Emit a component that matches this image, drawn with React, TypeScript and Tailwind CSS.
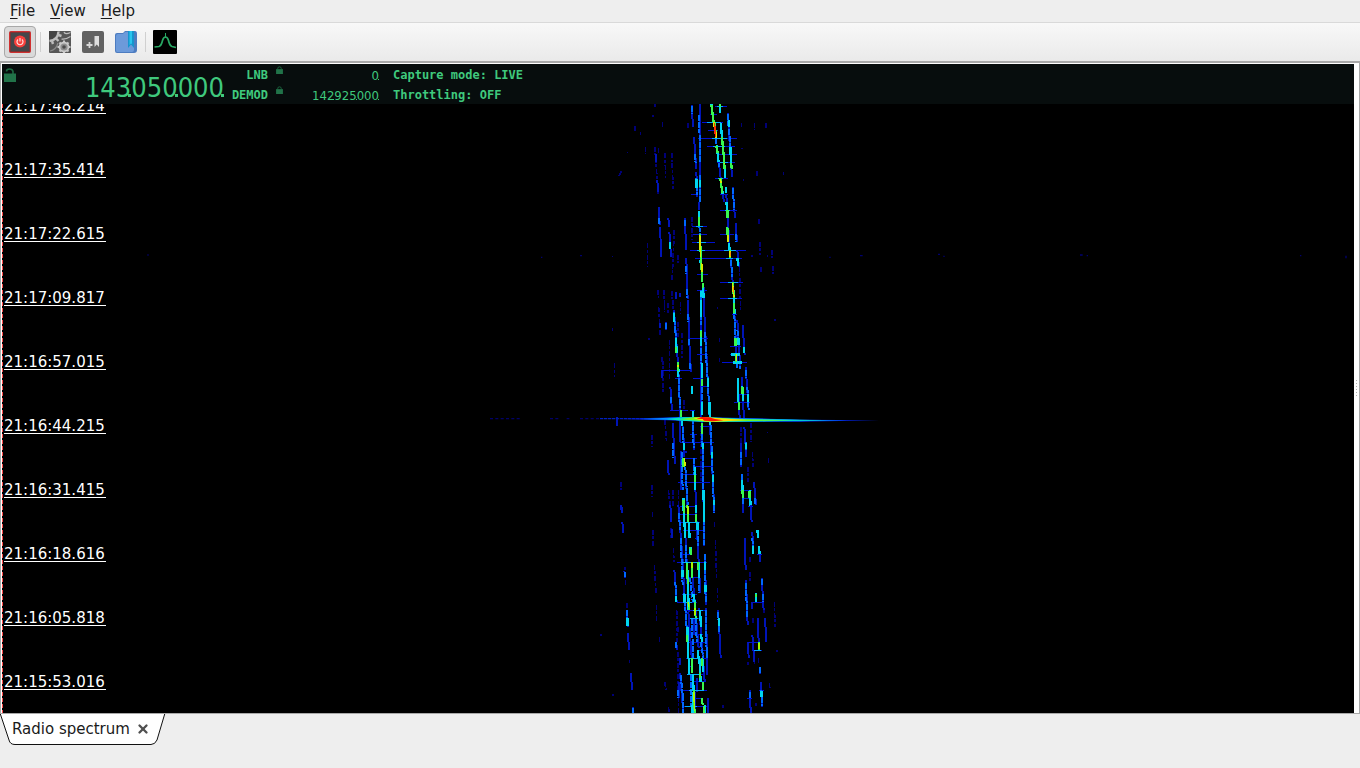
import React from 'react';
import { X } from 'lucide-react';

const MENUS = ['File', 'View', 'Help'];

const TIMESTAMPS = [
  '21:17:48.214',
  '21:17:35.414',
  '21:17:22.615',
  '21:17:09.817',
  '21:16:57.015',
  '21:16:44.215',
  '21:16:31.415',
  '21:16:18.616',
  '21:16:05.818',
  '21:15:53.016',
];

interface Level {
  color: string;
  width: number;
  dash?: string;
  d: string;
}

interface Block {
  offset: number;
  levels: Level[];
}

// Signal traces, weakest level first so the strong ones stay on top
const BLOCKS: Block[] = [
  {
    offset: 0,
    levels: [
      {
        color: '#000078',
        width: 5,
        dash: '15 4 9 6',
        d: 'M164 140L175 282M175 145V160M158 45V52M165 12V20M195 160L197 235M215 160V185M216 190L220 268M223 390L216 545M187 65V85M136 140V162M142 430V500M173 570L176 595M192 570L194 630M215 572V598M234 465V490M219 600V630M104 78V92M121 95V104M64 214L55 232M463 68V90M497 68V86M470 212V232M550 216V226M476 358V376M479 425V465M516 450V475M518 498V522M483 500V520M37 467V472M455 465V472M502 465V472M418 500L422 630M275 350V420M82 155V160M264 70V86M422 145H430M430 236V242M424 70V82',
      },
      {
        color: '#0014b8',
        width: 6,
        d: 'M275 15L279 82M282 112L289 208M289 215L292 290M299 12V305M177 320L179 376M180 380L184 472M205 355L208 380M208 395L213 470M254 353L259 450M259 475L263 598M357 190L362 235M369 285L372 306M379 285L388 430M392 475L398 545M383 40L396 232M398 262L405 355M407 370L411 427M412 450L417 500M168 162V186M172 240L174 276M228 575V596M239 580V592M312 560V630M297 305V330',
      },
      {
        color: '#0010d0',
        width: 3,
        d: 'M345 19H380M305 67H368M325 92H355M295 115H412M320 139H406M350 163H410M350 187H405M345 235H385M360 331H412M275 379H320M280 403H320M360 403H402M275 427H345M270 451H438M285 475H425M290 523H325M360 547H430M290 571H322M360 595H426M330 43H350M272 283H290M360 283H385',
      },
      {
        color: '#0068ff',
        width: 6,
        dash: '18 3',
        d: 'M276 18V42M284 163L287 190M289 235L291 285M298 45V100M299 105L300 190M300 225V305M298 378L300 403M302 570V630M383 42L386 85M387 88L391 140M398 265L403 330M393 480L397 530M255 360V378M259 498V522M261 568V594M178 355V373M408 402V425M346 115L350 135M356 190V200',
      },
      {
        color: '#00a8ff',
        width: 3,
        d: 'M350 19H368M322 67H362M335 115H380M340 139H375M360 187H385M355 235H370M375 331H390M288 379H308M290 427H318M290 451H315M372 451H408M378 475H400M385 547H415M385 595H412',
      },
      {
        color: '#00d5f0',
        width: 7,
        d: 'M289 237V265M300 240V262M297 332V356M308 548L311 594M303 572V592M334 12L336 25M350 135L356 187M359 18L360 40M362 68L366 112M374 208L375 235M377 262L378 280M391 140L393 190M379 305L382 330M387 430L389 450M412 475L415 497M209 427V448M401 594L403 630M300 480V490M366 265L368 283M386 60V80',
      },
      {
        color: '#38f850',
        width: 7,
        d: 'M334 14L341 66M359 12V20M366 112L371 165M371 165L374 208M393 190L396 208M349 138L353 160M361 235L367 280M382 330V355M382 382L384 427M296 352L298 378M299 403L307 546M389 450L391 475M398 546L402 595M401 600V626M308 548V565M343 65L349 115',
      },
      {
        color: '#d8ec00',
        width: 5,
        d: 'M341 66L348 115M383 405V425M299 406L302 470M305 490L306 515M389 452L391 472M397 548L402 592M361 238L363 250M349 96V114M373 188V192',
      },
      { color: '#ff3000', width: 5, d: 'M343 68L347 112' },
      { color: '#ff9000', width: 3, d: 'M399 560L401 578M390 455V468' },
    ],
  },
  {
    offset: 600,
    levels: [
      {
        color: '#000078',
        width: 5,
        dash: '15 4 9 6',
        d: 'M176 22L181 108M193 0V35M204 10V42M241 5V42M188 180L190 276M234 65V110M246 100V175M208 120V240M195 360L200 430M155 405V440M155 555V592M43 190V232M37 84V94M146 114V120M525 58V64M352 20V28M358 115V125M358 175V186M205 570L212 630M219 570V618M235 570V628M452 370V425M457 455L459 500M505 475V495M444 500V546M62 545V570M302 380V545M422 380V430M502 395V400M185 170V185M252 300V330',
      },
      {
        color: '#0014b8',
        width: 6,
        d: 'M197 65L199 90M180 70V85M264 0L268 130M268 130L273 215M222 30L234 190M235 210L241 355M187 210V235M211 260L216 332M218 370L225 492M203 480L206 525M240 360V425M249 378L253 470M256 500L263 630M243 452V570M278 330L282 450M282 475L289 630M302 0V350M306 350L311 630M311 0L343 630M401 0L412 205M412 60L421 205M428 75L434 165M437 200L446 330M413 235L419 355M425 230L432 355M422 430V500M433 380L439 470M425 522L430 630M462 545L468 615M50 350V378M64 618V630M250 455H260',
      },
      {
        color: '#0010d0',
        width: 3,
        d: 'M270 115H325M290 163H325M280 235H310M185 211H270M225 235H245M300 259H328M390 139H422M390 163H420M365 187H440M415 283H445M402 307H450M210 331H265M270 331H285M300 379H335M270 403H290M240 427H342M240 475H290M280 499H340M240 523H290M235 547H330M420 571H455M425 595H450M240 619H290M395 43H412M330 427H342',
      },
      {
        color: '#0068ff',
        width: 6,
        dash: '18 3',
        d: 'M222 36L225 90M226 90L230 160M235 212L240 325M265 43V66M267 116V138M271 188V210M278 332L281 445M302 0V75M304 145L305 230M306 262V345M307 403L309 570M315 95L320 200M321 200L330 375M332 375L337 500M337 500L342 630M403 45L406 115M410 187V205M249 380V430M256 500L263 615M245 455L248 570M218 430V475M212 290V310M432 140V163M437 210V235M437 425V450M422 455V498M425 522L428 570M430 595V630M465 595V612M412 90L417 130M65 620V630M198 70V86M282 475V525M289 620V630M442 260L446 330M421 198V206',
      },
      {
        color: '#00d5f0',
        width: 7,
        d: 'M222 38V66M228 115L230 160M276 258V282M302 0V50M303 90V138M305 190V235M323 235V260M328 305L330 376M306 307V345M413 235L415 305M444 283V305M432 142V160M401 0L404 42M415 115V135M251 428V450M278 332V350M284 500L286 570M336 455V475M338 525V545M310 570L312 630M341 600V630M437 428V448M246 360V378M250 595V630M426 540L428 570M449 570L452 618M426 258L430 303M233 212V230M309 430V447M394 163H420M398 187H425M231 211H240',
      },
      {
        color: '#38f850',
        width: 7,
        d: 'M233 187L234 212M243 330V355M305 237V258M306 370L307 403M402 10V40M406 115V138M416 307V330M427 260V282M427 570L429 594M448 572V595M263 617V630M284 525V547M250 475V500M228 140V158M303 92V112M250 600V620M408 162V187',
      },
      { color: '#d8ec00', width: 5, d: 'M409 163V184M253 475L255 498M233 195V202M262 620V630' },
    ],
  },
  {
    offset: 1215,
    levels: [
      {
        color: '#000078',
        width: 5,
        dash: '15 4 9 6',
        d: 'M157 20V40M159 75L160 122M163 180L168 265M169 300V352M178 395V410M194 532L198 555M205 605L208 623M76 225V240M75 185V195M80 295V312M88 465V475M38 568V574M220 130L222 172M230 315L232 390M235 365L230 410M233 440L236 625M343 50V66M346 105L350 218M352 250V290M523 290L525 365M508 535L510 555M530 436V442M369 600V610M449 155V172M450 200V230M2 388V394M458 340V360M468 595V602M492 310V325M444 470V480M213 70V100M463 450V480M475 460V475',
      },
      {
        color: '#0014b8',
        width: 6,
        d: 'M64 0L66 25M67 52L70 85M73 197L76 220M80 315L85 365M84 385L87 435M92 505L97 555M98 605V625M211 0L214 52M215 72V98M223 195L230 292M228 410L232 436M241 460V480M235 0L249 180M248 180L262 400M240 505L250 623M257 100L266 320M265 320L276 470M278 218L296 430M287 0L301 265M298 310L314 530M311 0V122M314 148L319 300M318 310L322 510M325 580V623M341 0L343 25M354 315L360 410M360 410L362 460M430 0V25M434 100L437 195M438 225L443 360M452 0L455 52M457 80L460 148M476 122L481 170M485 218L491 315M495 340L499 410M473 340L476 410M457 390L463 470M444 410L446 460M450 555L452 623M480 485V507M483 530L487 605M455 290V312M236 530V580M286 560V623M281 340V390M292 520V560',
      },
      {
        color: '#0010d0',
        width: 3,
        d: 'M245 3H290M235 27H285M240 52H300M250 75H315M285 100H296M240 148H275M230 172H320M260 218H300M245 268H290M230 292H290M258 316H320M265 340H305M260 388H310M265 412H320M290 435H325M258 460H325M265 484H280M265 507H310M280 530H315M245 555H320M285 580H310M245 604H325M452 100H462M472 148H485M460 292H492M445 3H460M445 412H480M455 435H485M440 580H455M478 555H492',
      },
      {
        color: '#0068ff',
        width: 6,
        dash: '18 3',
        d: 'M237 25L240 75M242 100L248 240M253 265L262 400M272 510L275 623M288 340L290 410M292 50L294 122M298 220V265M314 148L317 290M318 315L320 460M322 438V460M341 0V25M354 320L358 385M438 235L441 340M457 100L460 147M226 230L229 292M80 315L84 362M74 200V216M483 555L487 603M98 608V625M488 268V290M485 222V243M242 510L248 570M270 218L278 290M275 340L280 460M235 555V578M480 486V505M450 560V578M229 412V432M312 20V120M302 410L310 460M440 410V412M250 570V623M258 120V170',
      },
      {
        color: '#00a8ff',
        width: 3,
        d: 'M245 172H295M255 52H290M250 292H275M278 316H308M270 340H295M262 460H300M262 507H300M268 555H312M255 604H290M462 435H482',
      },
      {
        color: '#00d5f0',
        width: 7,
        d: 'M250 0L256 98M266 50L269 100M262 365L265 460M266 460L268 507M264 240L266 315M280 268L284 292M298 460L302 530M293 435L296 460M278 507L281 555M287 0V25M292 50V75M311 0V50M295 170L297 218M300 315L303 365M303 388L306 410M314 172V195M316 240V262M247 195V215M253 268V290M271 125V148M472 75L475 98M476 122L479 147M467 265V292M356 340V362M82 340V362M228 272V290M484 558V575M261 170L264 240M279 560V623M315 600V623M307 460L309 500M458 124V146M476 410V435M275 600V623',
      },
      {
        color: '#38f850',
        width: 6,
        d: 'M262 0L265 52M252 0V24M271 125L273 150M275 170L277 218M261 175L263 236M265 290L267 315M284 292L287 340M289 27V50M295 172V196M275 460L277 505M281 555L284 623M307 460V484M310 530V555M306 580L308 600M313 604V623M262 390V412M467 268V276M477 412V434M300 505V520',
      },
      { color: '#a8f800', width: 5, d: 'M263 3L264 28M276 172V190M265 292V306M285 310V330M282 560L284 618M477 413V432' },
    ],
  },
];

const Waterfall: React.FC = () => (
  <svg
    className="absolute inset-0 h-full w-full"
    viewBox="-1794 12 4056 1827"
    preserveAspectRatio="xMidYMin slice"
    fill="none"
    aria-hidden="true"
  >
    {BLOCKS.map((block) => (
      <g key={block.offset} transform={`translate(0 ${block.offset})`} shapeRendering="crispEdges">
        {block.levels.map((level, i) => (
          <path key={i} d={level.d} stroke={level.color} strokeWidth={level.width} strokeDasharray={level.dash} />
        ))}
      </g>
    ))}

    {/* Faint noise row */}
    <path
      d="M-1356 463V467M-175 470V474M-60 467H-54M690 470V474M780 467H788M1014 463H1020M1030 469H1034M1440 465H1448M1460 467H1464M2100 467H2104M2238 467V475"
      stroke="#000070"
      strokeWidth="4"
    />

    {/* Wideband burst */}
    <g transform="translate(0 600)">
      <path d="M-330 356H-235M-150 356H-120M-100 356H-92M-60 356H0" stroke="#000068" strokeWidth="4" strokeDasharray="9 7" />
      <path d="M0 356H250" stroke="#0020c0" strokeWidth="4" strokeDasharray="10 2" />
      <path d="M60 357L240 351L400 353L600 359L838 361L600 365L330 366L200 361Z" fill="#0020d8" />
      <path d="M120 357L240 352L400 354L600 359L740 361L600 364L330 366L230 361Z" fill="#0090ff" />
      <path d="M200 357L250 352L330 352L420 357L680 361L500 364L320 366L245 362Z" fill="#00e8c0" />
      <path d="M240 358L285 351L340 353L420 358L580 361L400 364L320 365L280 361Z" fill="#70f820" />
      <path d="M280 355L310 351L345 354L440 360L345 365L315 364L300 360Z" fill="#ffe000" />
      <path d="M290 356L305 351L328 352L345 357L370 361L340 364L312 362L308 357Z" fill="#ff1000" />
    </g>
  </svg>
);

interface PadLockProps {
  className: string;
  label: string;
  open?: boolean;
}

const PadLock: React.FC<PadLockProps> = ({ className, label, open }) => (
  <button aria-label={label} className={className}>
    <svg viewBox="0 0 12 14" className="block h-full w-full">
      <path
        d={open ? 'M2.5 3.500Q2.500 1 5.500 1T9 3.500V6' : 'M3 6V4Q3 1.500 6 1.500T9 4V6'}
        fill="none"
        stroke="#1d6841"
        strokeWidth="1.6"
      />
      <rect x="0" y="5.5" width="12" height="8.5" fill="#217349" />
    </svg>
  </button>
);

const Separator: React.FC = () => <div className="h-5 w-px bg-[#d0d0d0]" />;

const Toolbar: React.FC = () => (
  <div className="flex h-[39px] items-center border-t border-[#d9d9d9] bg-linear-to-b from-[#f8f8f8] to-[#eaeaea] pl-1">
    <button
      aria-label="Start capture"
      className="flex h-8 w-8 items-center justify-center rounded-sm border border-[#a8a8a8] bg-[#dadada]"
    >
      <svg viewBox="0 0 22 22" className="h-[22px] w-[22px]">
        <rect x="0.5" y="0.5" width="21" height="21" rx="1" fill="#45474a" stroke="#d03030" />
        <rect x="1.5" y="1.5" width="19" height="19" fill="none" stroke="#7a3434" />
        <circle cx="11" cy="10.5" r="6" fill="#f8403c" />
        <path d="M9 8.5A3 3 0 1 0 13 8.5M11 7V10.5" fill="none" stroke="#ffe2e0" strokeWidth="1.2" />
      </svg>
    </button>
    <div className="ml-1">
      <Separator />
    </div>
    <div className="flex items-center gap-[9px] px-[7px]">
      <button aria-label="Preferences">
        <svg viewBox="0 0 24 24" className="h-6 w-6">
          <rect x="1" y="1" width="22" height="22" rx="1" fill="#575757" />
          <path d="M1 1H10Q10 9 1 10Z" fill="#444444" />
          <g fill="none" stroke="#bdbdbd">
            <path d="M1.500 11Q10 10 10.500 1.500" strokeWidth="2.400" />
            <path d="M4 11L5 14M8 8.500L10.500 11M10.500 5L13.500 6" strokeWidth="2.400" />
            <path d="M13.500 9Q17 10 22.500 6.500M16 2Q17 5 22.500 2.500" strokeWidth="1.200" />
            <path d="M2 21Q8 20 10 13" stroke="#8a8a8a" strokeWidth="1.200" />
          </g>
          <circle cx="16" cy="17" r="4.500" fill="#8f8f8f" stroke="#c9c9c9" strokeWidth="1.800" />
          <circle cx="16" cy="17" r="1.800" fill="#4c4c4c" />
          <path
            d="M16 10.500V13M16 21V23M9.500 17H12M20 17H22.500M11.500 12.500L13 14M20.500 12.500L19 14M11.500 21.500L13 20M20.500 21.500L19 20"
            stroke="#c9c9c9"
            strokeWidth="2"
          />
        </svg>
      </button>
      <button aria-label="Add bookmark">
        <svg viewBox="0 0 24 24" className="h-6 w-6">
          <rect x="1" y="1" width="22" height="22" rx="2" fill="#626262" />
          <path d="M13.500 6H18V17L15.700 14.500L13.500 17Z" fill="#dedede" />
          <path d="M8.500 12V18M5.500 15H11.500" stroke="#d8d8d8" strokeWidth="1.800" />
        </svg>
      </button>
      <button aria-label="Bookmarks">
        <svg viewBox="0 0 24 24" className="h-6 w-6">
          <path d="M1 5Q1 3 3 3H9L11 1H21Q23 1 23 4V20Q23 23 20 23H3Q1 23 1 21Z" fill="#4d7cc0" />
          <path d="M2 6Q2 4 4 4H9L11 2H20V20Q20 22 18 22H3Q2 22 2 20Z" fill="#6c9ada" />
          <path d="M14 1H20V18L17 14.500L14 18Z" fill="#1695cd" />
          <path d="M15.500 1H18V14L17 13.500L15.500 15Z" fill="#28c5ee" />
        </svg>
      </button>
    </div>
    <Separator />
    <button aria-label="Radio spectrum" className="ml-[7px]">
      <svg viewBox="0 0 24 24" className="h-6 w-6">
        <rect width="24" height="24" rx="1" fill="#000000" />
        <path
          d="M1.500 17L6 16.500Q8.500 15.500 9.500 10.500Q10.500 7 12.500 7T15.500 10.500Q16.500 15.500 19 16.500L23 17.500"
          fill="none"
          stroke="#28a864"
          strokeWidth="1.700"
        />
        <path d="M12.500 3V8" stroke="#28a864" strokeWidth="1" />
      </svg>
    </button>
  </div>
);

interface LcdFrequencyProps {
  groups: string[];
  dotClass: string;
}

// The dots share the cell of the digit before them, as on an LCD
const LcdFrequency: React.FC<LcdFrequencyProps> = ({ groups, dotClass }) => (
  <div aria-label={`${groups.join('.')} Hz`}>
    {groups.map((group, i) => (
      <React.Fragment key={i}>
        {group}
        <i className={`inline-block bg-[#3fc97d] ${dotClass}`} />
      </React.Fragment>
    ))}
  </div>
);

const StatusPanel: React.FC = () => (
  <div className="flex h-10 shrink-0 overflow-hidden bg-[#070d0d] font-['DejaVu_Sans_Mono','Liberation_Mono',monospace] text-[12px] leading-5 font-bold text-[#3fc97d]">
    <div className="w-4 pt-1 pl-0.5">
      <PadLock open label="Lock frequency" className="block h-[14px] w-3" />
    </div>
    <div className="w-[206px] pt-1 text-right font-['DejaVu_Sans_Condensed','DejaVu_Sans',sans-serif] text-[27px] leading-10 font-normal whitespace-nowrap">
      <LcdFrequency groups={['143', '050', '000']} dotClass="-ml-[3px] h-[3px] w-[3px]" />
    </div>
    <div className="w-11 pt-px text-right">
      <div>LNB</div>
      <div>DEMOD</div>
    </div>
    <div className="flex flex-col gap-3 pt-0.5 pl-2">
      <PadLock label="Lock LNB" className="block h-2 w-[7px]" />
      <PadLock label="Lock demodulator" className="block h-2 w-[7px]" />
    </div>
    <div className="w-24 pt-0.5 text-right font-['DejaVu_Sans_Condensed','DejaVu_Sans',sans-serif] text-[13px] font-normal">
      <LcdFrequency groups={['0']} dotClass="-ml-px h-px w-px" />
      <LcdFrequency groups={['142', '925', '000']} dotClass="-ml-px h-px w-px" />
    </div>
    <div className="pt-px pl-3.5 whitespace-nowrap">
      <div>Capture mode: LIVE</div>
      <div>Throttling: OFF</div>
    </div>
  </div>
);

const App: React.FC = () => {
  return (
    <div className="flex h-screen flex-col overflow-hidden bg-[#eeeeee] font-['DejaVu_Sans',sans-serif] text-[15px] text-[#1a1a1a]">
      <nav className="flex h-[22px] shrink-0 items-center gap-[15px] pl-2.5 leading-5">
        {MENUS.map((menu) => (
          <button key={menu}>
            <span className="underline underline-offset-2">{menu[0]}</span>
            {menu.slice(1)}
          </button>
        ))}
      </nav>

      <Toolbar />

      <main className="flex min-h-0 flex-1 border-x border-t-2 border-b border-[#a9a9a9] bg-white">
        <div className="flex min-w-0 flex-1 flex-col pt-px pl-px">
          <StatusPanel />
          <div className="relative min-h-0 flex-1 overflow-hidden bg-black">
            <Waterfall />
            <div className="relative flex h-full">
              {/* Time axis marker */}
              <div className="w-px bg-[repeating-linear-gradient(to_bottom,#ff5050_0px,#ff5050_4px,#000000_4px,#000000_6px)]" />
              <ol className="pl-px text-white">
                {TIMESTAMPS.map((time) => (
                  <li key={time} className="flex h-16 items-end first:h-[10px]">
                    <time className="w-[102px] border-b border-white leading-[14px] whitespace-nowrap">{time}</time>
                  </li>
                ))}
              </ol>
            </div>
          </div>
        </div>

        {/* Splitter handle */}
        <div className="flex w-[5px] flex-col items-center justify-center gap-0.5">
          {[0, 1, 2, 3, 4, 5].map((dot) => (
            <span key={dot} className="h-px w-px bg-[#b0b0b0]" />
          ))}
        </div>
      </main>

      <footer className="h-[54px] shrink-0">
        <div className="relative h-8 w-[166px]">
          <svg viewBox="0 0 166 32" className="absolute inset-0 h-full w-full" aria-hidden="true">
            <path d="M0 -1L9 26Q10 30.500 15 30.500H151Q155 30.500 157 26L165 -1" fill="#ffffff" stroke="#111111" />
          </svg>
          <div className="relative flex h-[30px] items-center pl-3">
            <button className="whitespace-nowrap">Radio spectrum</button>
            <button aria-label="Close tab" className="ml-1.5 text-[#505050]">
              <X className="h-3.5 w-3.5" strokeWidth={4} />
            </button>
          </div>
        </div>
      </footer>
    </div>
  );
};

export default App;
